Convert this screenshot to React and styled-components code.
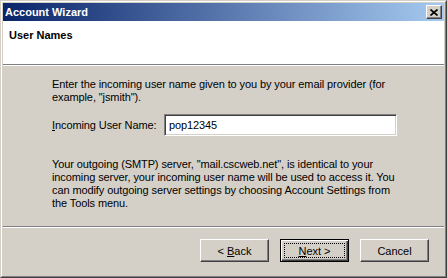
import React from "react";
import styled, { createGlobalStyle } from "styled-components";

const GlobalStyle = createGlobalStyle`
  html, body {
    margin: 0;
    padding: 0;
    background: #d4d0c8;
  }
  body {
    font-family: "Liberation Sans", Arial, sans-serif;
    font-size: 11px;
    color: #000;
  }
`;

const Window = styled.div`
  width: 447px;
  height: 278px;
  box-sizing: border-box;
  border-top: 1px solid #d4d0c8;
  border-left: 1px solid #d4d0c8;
  border-right: 1px solid #404040;
  border-bottom: 1px solid #404040;
`;

const Frame = styled.div`
  height: 100%;
  box-sizing: border-box;
  border-top: 1px solid #fff;
  border-left: 1px solid #fff;
  border-right: 1px solid #808080;
  border-bottom: 1px solid #808080;
  padding: 1px;
  background: #d4d0c8;
  display: flex;
  flex-direction: column;
`;

const TitleBar = styled.div`
  height: 18px;
  flex: none;
  display: flex;
  align-items: center;
  justify-content: space-between;
  padding: 0 2px 0 2px;
  background: linear-gradient(to right, #0a246a, #a6caf0);
`;

const Title = styled.span`
  color: #fff;
  font-weight: bold;
  font-size: 11px;
`;

const CloseButton = styled.div`
  width: 16px;
  height: 14px;
  box-sizing: border-box;
  background: #d4d0c8;
  border-top: 1px solid #fff;
  border-left: 1px solid #fff;
  border-right: 1px solid #404040;
  border-bottom: 1px solid #404040;
  box-shadow: inset -1px -1px 0 #808080;
  display: flex;
  align-items: center;
  justify-content: center;
`;

const Header = styled.div`
  height: 43px;
  flex: none;
  background: #fff;
  padding: 8px 0 0 6px;
  box-sizing: border-box;
  font-weight: bold;
`;

const Rule = styled.div`
  height: 1px;
  flex: none;
  background: #808080;
  border-bottom: 1px solid #fff;
`;

const Body = styled.div`
  flex: 1;
  padding: 12px 0 0 49px;
  line-height: 13px;
  letter-spacing: -0.1px;
`;

const Para = styled.p`
  margin: 0 0 ${(p) => p.$after || 0}px 0;
  white-space: nowrap;
`;

const FieldRow = styled.div`
  display: flex;
  align-items: center;
  margin-bottom: 22px;
`;

const Label = styled.label`
  width: 112px;
  flex: none;
`;

const Input = styled.div`
  width: 233px;
  height: 22px;
  box-sizing: border-box;
  background: #fff;
  border-top: 1px solid #808080;
  border-left: 1px solid #808080;
  border-right: 1px solid #fff;
  border-bottom: 1px solid #fff;
  box-shadow: inset 1px 1px 0 #404040, inset -1px -1px 0 #d4d0c8;
  padding: 0 4px;
  display: flex;
  align-items: center;
`;

const Footer = styled.div`
  display: flex;
  justify-content: flex-end;
  gap: 11px;
  padding: 11px 15px 13px 0;
`;

const Button = styled.div`
  width: 69px;
  height: 23px;
  box-sizing: border-box;
  display: flex;
  align-items: center;
  justify-content: center;
  background: #d4d0c8;
  position: relative;
  border: 1px solid;
  border-color: #fff #404040 #404040 #fff;
  box-shadow: inset -1px -1px 0 #808080;

  &[data-default="true"] {
    border-color: #000;
    box-shadow: inset 1px 1px 0 #fff, inset -1px -1px 0 #404040,
      inset -2px -2px 0 #808080;
  }
`;

const Focus = styled.div`
  position: absolute;
  inset: 3px;
  border: 1px dotted #000;
`;

const Key = styled.span`
  text-decoration: underline;
`;

export default function App() {
  return (
    <>
      <GlobalStyle />
      <Window>
        <Frame>
          <TitleBar>
            <Title>Account Wizard</Title>
            <CloseButton>
              <svg width="8" height="7" viewBox="0 0 8 7">
                <path d="M0.5 0.5 L7.5 6.5 M7.5 0.5 L0.5 6.5" stroke="#000" strokeWidth="1.6" />
              </svg>
            </CloseButton>
          </TitleBar>
          <Header>User Names</Header>
          <Rule />
          <Body>
            <Para $after={10}>
              Enter the incoming user name given to you by your email provider (for
              <br />
              example, "jsmith").
            </Para>
            <FieldRow>
              <Label>
                <Key>I</Key>ncoming User Name:
              </Label>
              <Input>pop12345</Input>
            </FieldRow>
            <Para $after={16}>
              Your outgoing (SMTP) server, "mail.cscweb.net", is identical to your
              <br />
              incoming server, your incoming user name will be used to access it. You
              <br />
              can modify outgoing server settings by choosing Account Settings from
              <br />
              the Tools menu.
            </Para>
          </Body>
          <Rule />
          <Footer>
            <Button>
              &lt;&nbsp;<Key>B</Key>ack
            </Button>
            <Button data-default="true">
              <Focus />
              <Key>N</Key>ext &gt;
            </Button>
            <Button>Cancel</Button>
          </Footer>
        </Frame>
      </Window>
    </>
  );
}
